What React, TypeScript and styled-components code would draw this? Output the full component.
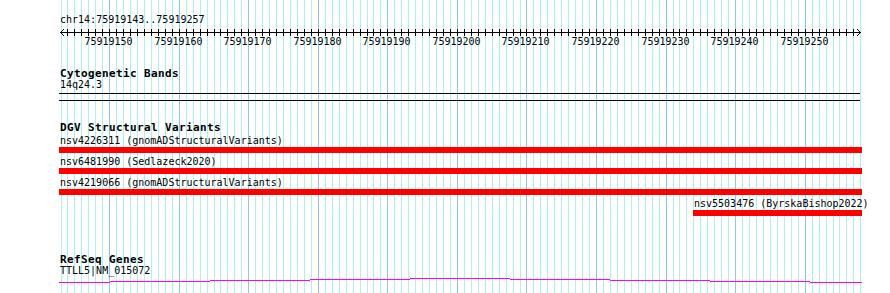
import styled, { createGlobalStyle } from 'styled-components';

const START = 75919143;
const END = 75919257;
const ORIGIN = 60.5;
const BP = 6.955;
const TRACK_LEFT = 59;
const TRACK_RIGHT = 862;
const TRACK_WIDTH = TRACK_RIGHT - TRACK_LEFT;
const PAGE_HEIGHT = 293;

const lineX = (i: number) => Math.round(ORIGIN + i * BP);

const GlobalStyle = createGlobalStyle`
  html, body {
    margin: 0;
    padding: 0;
    background: #fff;
  }
  body {
    font-family: 'DejaVu Sans Mono', 'Liberation Mono', monospace;
    color: #000;
  }
`;

const StyledPage = styled.div`
  position: relative;
  width: 890px;
  height: ${PAGE_HEIGHT}px;
  overflow: hidden;
  background: #fff;
`;

const StyledGrid = styled.svg`
  position: absolute;
  top: 0;
  left: 0;
  width: 890px;
  height: ${PAGE_HEIGHT}px;
`;

const StyledContent = styled.div`
  position: relative;
  display: flex;
  flex-direction: column;
  width: ${TRACK_WIDTH}px;
  padding: 14px 0 0 ${TRACK_LEFT}px;
`;

const StyledLocation = styled.div`
  margin-left: 1px;
  font-size: 10px;
  line-height: 12px;
  height: 12px;
  white-space: nowrap;
`;

const StyledRuler = styled.svg`
  display: block;
  width: ${TRACK_WIDTH}px;
  height: 20px;
  overflow: visible;

  text {
    font-family: 'DejaVu Sans Mono', 'Liberation Mono', monospace;
    font-size: 10px;
    fill: #000;
  }
`;

const StyledTrack = styled.section<{ $gap: number }>`
  display: flex;
  flex-direction: column;
  margin-top: ${(props) => props.$gap}px;
`;

const StyledTrackTitle = styled.h3`
  margin: 0 0 0 1px;
  font-size: 11px;
  line-height: 11px;
  height: 11px;
  font-weight: bold;
  letter-spacing: 0.38px;
  white-space: nowrap;
`;

const StyledFeatureList = styled.div<{ $offset: number }>`
  display: flex;
  flex-direction: column;
  gap: 4px;
  margin-top: ${(props) => props.$offset}px;
`;

const StyledFeature = styled.div`
  display: flex;
  flex-direction: column;
  align-items: stretch;
`;

const StyledFeatureLabel = styled.div`
  font-size: 10px;
  line-height: 10px;
  height: 10px;
  margin-left: 1px;
  white-space: nowrap;
`;

const StyledBar = styled.div`
  height: 6px;
  margin-top: 1px;
  background: #ff0000;
`;

const StyledBandLabel = styled.div`
  margin: 1px 0 0 1px;
  font-size: 10px;
  line-height: 10px;
  height: 10px;
`;

const StyledBand = styled.div`
  height: 6px;
  margin: 3px 2px 0 0;
  border-top: 1px solid #000;
  border-bottom: 1px solid #000;
`;

const StyledGeneLabel = styled.div`
  margin: 1px 0 0 1px;
  font-size: 10px;
  line-height: 10px;
  height: 10px;
`;

const StyledGeneLine = styled.svg`
  display: block;
  width: ${TRACK_WIDTH}px;
  height: 7px;
`;

type Variant = { id: string; study: string; start?: number };

const variants: Variant[] = [
    { id: 'nsv4226311', study: 'gnomADStructuralVariants' },
    { id: 'nsv6481990', study: 'Sedlazeck2020' },
    { id: 'nsv4219066', study: 'gnomADStructuralVariants' },
    { id: 'nsv5503476', study: 'ByrskaBishop2022', start: 75919234 },
];

function Grid() {
    const lines = [];
    for (let i = 0; i <= END - START + 1; i++) {
        const major = (START + i) % 10 === 0;
        lines.push(
            <line
                key={i}
                x1={lineX(i) + 0.5}
                x2={lineX(i) + 0.5}
                y1={0}
                y2={PAGE_HEIGHT}
                stroke={major ? '#8cc6ee' : '#aeeff1'}
                strokeWidth={1}
            />
        );
    }
    return <StyledGrid>{lines}</StyledGrid>;
}

function Ruler() {
    const ticks = [];
    const labels = [];
    for (let i = 1; i < END - START + 1; i++) {
        const x = lineX(i) + 0.5 - TRACK_LEFT;
        const major = (START + i) % 10 === 0;
        ticks.push(<line key={i} x1={x} x2={x} y1={3} y2={10} stroke="#000" />);
        if (major) {
            labels.push(
                <text key={`l${i}`} x={x - 1} y={19} textAnchor="middle">
                    {START + i}
                </text>
            );
        }
    }
    const right = TRACK_WIDTH - 1;
    return (
        <StyledRuler>
            <line x1={1} x2={right} y1={6.5} y2={6.5} stroke="#000" />
            <polyline points="5,3 1.5,6.5 5,10" fill="none" stroke="#000" />
            <polyline points={`${right - 4},3 ${right - 0.5},6.5 ${right - 4},10`} fill="none" stroke="#000" />
            {ticks}
            {labels}
        </StyledRuler>
    );
}

function GeneLine() {
    const breaks = [59, 110, 210, 310, 410, 510, 610, 710, 810, 862];
    const levels = [282, 281, 280, 279, 278, 279, 280, 281, 282];
    const d = levels
        .map((y, i) => `M${breaks[i] - TRACK_LEFT} ${y - 276 + 0.5} H${breaks[i + 1] - TRACK_LEFT}`)
        .join(' ');
    return (
        <StyledGeneLine>
            <path d={d} stroke="#ff00ff" strokeWidth={1} fill="none" />
        </StyledGeneLine>
    );
}

export default function App() {
    return (
        <StyledPage>
            <GlobalStyle />
            <Grid />
            <StyledContent>
                <StyledLocation>chr14:{START}..{END}</StyledLocation>
                <Ruler />

                <StyledTrack $gap={22}>
                    <StyledTrackTitle>Cytogenetic Bands</StyledTrackTitle>
                    <StyledBandLabel>14q24.3</StyledBandLabel>
                    <StyledBand />
                </StyledTrack>

                <StyledTrack $gap={21}>
                    <StyledTrackTitle>DGV Structural Variants</StyledTrackTitle>
                    <StyledFeatureList $offset={3}>
                        {variants.map((v) => {
                            const left = v.start ? lineX(v.start - START) - TRACK_LEFT : 0;
                            return (
                                <StyledFeature key={v.id} style={{ marginLeft: left }}>
                                    <StyledFeatureLabel>
                                        {v.id} ({v.study})
                                    </StyledFeatureLabel>
                                    <StyledBar />
                                </StyledFeature>
                            );
                        })}
                    </StyledFeatureList>
                </StyledTrack>

                <StyledTrack $gap={38}>
                    <StyledTrackTitle>RefSeq Genes</StyledTrackTitle>
                    <StyledGeneLabel>TTLL5|NM_015072</StyledGeneLabel>
                    <GeneLine />
                </StyledTrack>
            </StyledContent>
        </StyledPage>
    );
}
